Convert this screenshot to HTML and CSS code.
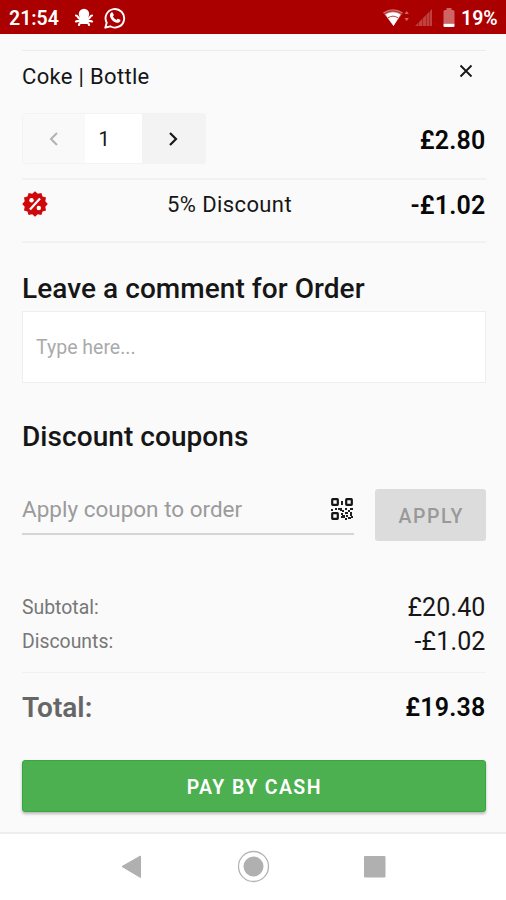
FILE: index.html
```html
<!DOCTYPE html>
<html lang="en">
<head>
<meta charset="utf-8">
<title>Order</title>
<link rel="stylesheet" href="styles.css">
</head>
<body>
<header class="status">
  <span class="clock">21:54</span>
  <svg class="octopus" width="20" height="20" viewBox="0 0 20 20" fill="none" stroke="#fff" stroke-width="2.200" stroke-linecap="round"><path d="M4.800 6a5.200 5.200 0 0 1 10.400 0c0 2-1.200 3-1.200 6l-1 4H7l-1-4c0-3-1.200-4-1.200-6z" fill="#fff" stroke="none"/><path d="M6 10.500C4 11 4 7.500 2 7.500M7 12.500c-2 1.500-4 0-5 1M8 13c0 3-3 1-3 4M14 10.500c2 .5 2-3 4-3M13 12.500c2 1.500 4 0 5 1M12 13c0 3 3 1 3 4"/></svg>
  <svg class="whatsapp" width="22" height="22" viewBox="0 0 22 22"><path d="M1.300 20.700l1.400-5A9.300 9.300 0 1 1 6.200 19.300z" fill="none" stroke="#fff" stroke-width="1.900" stroke-linejoin="round"/><path d="M7.400 5.500c.6-.4 1.200-.2 1.500.4l.9 2c.1.400-.5 1.100-.9 1.500.8 1.600 2 2.700 3.700 3.500.5-.6 1-1.300 1.500-1.100l2 1c.6.300.4 1.200 0 1.800-.8 1.100-2.200 1.500-3.600 1.100C8.900 14.700 6.600 12.200 6 9.300c-.2-1.500.2-2.900 1.400-3.800z" fill="#fff"/></svg>
  <svg class="wifi" width="28" height="20" viewBox="0 0 28 20"><path d="M0 4.500Q10-2 20 4.500L10.500 18z" fill="#cf7070"/><path d="M2.500 6.500Q10 2 17.500 6.500L10.500 18z" fill="#fff"/><path d="M1 5.800Q10 0 19 5.800M5 9.800Q10 6.500 15 9.800" fill="none" stroke="#b82b2b" stroke-width=".9"/><path d="M21.500 6l2.200-3 2.200 3zM21.500 10l2.200 3 2.200-3z" fill="#cf6666"/></svg>
  <svg class="signal" width="18" height="18" viewBox="0 0 18 18" fill="#c04040"><path d="M0 17l3.500-3.500V17zM4 13l3.500-3.500V17H4zM8 9l3-3v11H8zM11.500 5.500L14.500 2.500V17h-3zM15 2l2-2v17h-2z"/></svg>
  <svg class="battery" width="12" height="20" viewBox="0 0 12 20"><path d="M3.500 0h5v2H10q1.500 0 1.500 1.500V15H.5V3.500Q.5 2 2 2h1.500z" fill="#cf6464"/><path d="M.5 15.500h11V18q0 1-1 1h-9q-1 0-1-1z" fill="#fff"/></svg>
  <span class="percent">19%</span>
</header>
<main class="order">
  <section class="item">
    <div class="item-head"><span class="item-name">Coke | Bottle</span>
      <svg class="close" width="14" height="14" viewBox="0 0 14 14"><path d="M1.500 1.500l11 11M12.500 1.500l-11 11" stroke="#151515" stroke-width="1.800"/></svg>
    </div>
    <div class="item-row">
      <div class="stepper">
        <span class="step"><svg width="10" height="14" viewBox="0 0 10 14"><path d="M8 1L2 7l6 6" fill="none" stroke="#b2b2b2" stroke-width="2"/></svg></span>
        <span class="qty">1</span>
        <span class="step next"><svg width="10" height="14" viewBox="0 0 10 14"><path d="M2 1l6 6-6 6" fill="none" stroke="#181818" stroke-width="2.200"/></svg></span>
      </div>
      <span class="price">£2.80</span>
    </div>
  </section>
  <section class="discount">
    <svg class="badge" width="26" height="26" viewBox="-13 -13 26 26"><path fill="#cf0909" d="M0-12.800L2.800-10.300 6.400-11 7.500-7.500 11-6.400 10.300-2.800 12.800 0 10.300 2.800 11 6.400 7.500 7.500 6.400 11 2.800 10.300 0 12.800-2.800 10.300-6.400 11-7.500 7.500-11 6.400-10.300 2.800-12.800 0-10.300-2.800-11-6.400-7.500-7.500-6.400-11-2.800-10.300z"/><path d="M-5 5.500L5-5.500" stroke="#fff" stroke-width="2.200"/><circle cx="-3.500" cy="-3.800" r="2.200" fill="#fff"/><circle cx="3.800" cy="4" r="2.200" fill="#fff"/></svg>
    <span class="discount-name">5% Discount</span>
    <span class="price">-£1.02</span>
  </section>
  <h2 class="comment-title">Leave a comment for Order</h2>
  <div class="comment"><span>Type here...</span></div>
  <h2 class="coupon-title">Discount coupons</h2>
  <div class="coupon">
    <div class="field"><span class="hint">Apply coupon to order</span>
      <svg class="qr" width="22" height="22" viewBox="0 0 22 22"><g fill="none" stroke="#151515" stroke-width="2.200"><rect x="1.200" y="1.200" width="5.600" height="5.600" rx=".5"/><rect x="15.200" y="1.200" width="5.600" height="5.600" rx=".5"/><rect x="1.200" y="15.200" width="5.600" height="5.600" rx=".5"/></g><path fill="#222" d="M10 3h2v4h-2zM0 11h2v2H0zM4 10h2v2H4zM7 10h4v3H9v-1H7zM11 12h2v2h-2zM14 10h2v2h-2zM19 10h3v2h-3zM17 12h2v2h-2zM14 14h3v2h-3zM19 14h2v4h-2zM10 15h2v2h2v3h-4v-2h1v-1h-1zM15 17h2v2h-2zM17 19h3v2h-3zM14 20h2v2h-2zM20 18h2v2h-2z"/></svg>
    </div>
    <div class="apply"><span>APPLY</span></div>
  </div>
  <div class="summary">
    <div class="line"><span class="label">Subtotal:</span><span class="amount">£20.40</span></div>
    <div class="line"><span class="label">Discounts:</span><span class="amount">-£1.02</span></div>
  </div>
  <div class="total"><span class="total-label">Total:</span><span class="price">£19.38</span></div>
  <div class="pay"><span>PAY BY CASH</span></div>
</main>
<nav class="nav">
  <svg width="506" height="66" viewBox="0 0 506 66"><path d="M122 32.500L140.500 22v21.500z" fill="#b0b0b0" stroke="#b0b0b0" stroke-linejoin="round"/><circle cx="253.500" cy="32.500" r="15" fill="none" stroke="#b5b5b5" stroke-width="1.300"/><circle cx="253.500" cy="32.500" r="10" fill="#b0b0b0"/><rect x="364" y="22" width="21.500" height="21.500" rx="1" fill="#b0b0b0"/></svg>
</nav>
</body>
</html>
```
FILE: styles.css
```css
* { box-sizing: border-box; }
body { margin: 0; width: 506px; height: 900px; overflow: hidden; background: #fafafa; color: #161616; font-family: Roboto, sans-serif; white-space: nowrap; }
svg { display: block; flex: none; }
.status { display: flex; align-items: center; height: 34px; padding: 2px 8px 0 9px; background: #aa0000; color: #fff; font-size: 19.500px; font-weight: 600; }
.clock { width: 65px; }
.whatsapp { margin-left: 10px; }
.wifi { margin-left: auto; }
.signal { margin-left: 4px; }
.battery { margin-left: 10px; }
.percent { margin-left: 6px; width: 37px; }
.order { padding: 16px 20.500px 0 22px; height: 798px; }
.item { height: 128px; border-top: 1.500px solid #ececec; }
.item-head { display: flex; justify-content: space-between; height: 62px; padding-top: 13px; }
.item-name, .discount-name { font-size: 22px; line-height: 26px; letter-spacing: .32px; }
.close { margin: 0 13px 0 0; }
.item-row { display: flex; justify-content: space-between; height: 52px; }
.stepper { display: flex; width: 184px; height: 51px; margin-left: -.5px; border: 1px solid #f3f3f3; border-radius: 3px; }
.step { display: flex; width: 62px; align-items: center; justify-content: center; background: #f9f9f9; }
.next { flex: 1; background: #f3f3f3; }
.qty { width: 57px; padding-left: 14px; background: #fff; font-size: 20px; line-height: 51px; }
.price { font-size: 25px; font-weight: 600; line-height: 55px; letter-spacing: .2px; color: #080808; }
.discount { display: flex; align-items: center; height: 65px; padding-bottom: 13px; border-top: 2px solid #f1f1f1; border-bottom: 2px solid #f1f1f1; }
.discount-name { width: 125px; margin-left: 119px; margin-right: auto; padding-top: 1px; letter-spacing: .4px; }
.discount .price { padding-top: 2px; }
h2 { margin: 0; font-size: 28px; font-weight: 500; line-height: 36px; letter-spacing: .06px; }
.comment-title { padding-top: 28px; height: 68px; }
.comment { height: 72px; padding: 0 13px; border: 1.500px solid #eee; background: #fff; color: #aaa; font-size: 19.500px; line-height: 71px; }
.coupon-title { padding-top: 36px; height: 106px; }
.coupon { display: flex; justify-content: space-between; height: 52px; }
.field { display: flex; align-items: center; justify-content: space-between; width: 332px; height: 46px; padding: 0 1px 5px 0; border-bottom: 2px solid #d5d5d5; }
.hint { padding-top: 1px; color: #9b9b9b; font-size: 22.500px; }
.apply { width: 110.500px; padding-left: 2px; border-radius: 3px; background: #dcdcdc; color: #999; font-size: 19.500px; font-weight: 500; line-height: 55px; text-align: center; letter-spacing: 1.500px; }
.summary { height: 132px; padding-top: 49px; border-bottom: 1.500px solid #f1f1f1; }
.line { display: flex; align-items: center; justify-content: space-between; height: 34.500px; }
.label { color: #777; font-size: 19.400px; }
.amount { font-size: 25px; letter-spacing: .12px; }
.total { display: flex; align-items: center; justify-content: space-between; height: 87px; padding-bottom: 18px; }
.total-label { color: #666; font-size: 28px; font-weight: 600; }
.pay { height: 52px; padding-left: 1px; border-radius: 3px; background: #4caf50; border: 1px solid #36a83c; box-shadow: 0 2px 3px #0004; color: #fff; font-size: 19.500px; font-weight: 600; line-height: 53px; text-align: center; letter-spacing: 1.400px; }
.nav { height: 68px; border-top: 2px solid #eee; background: #fff; }
```
